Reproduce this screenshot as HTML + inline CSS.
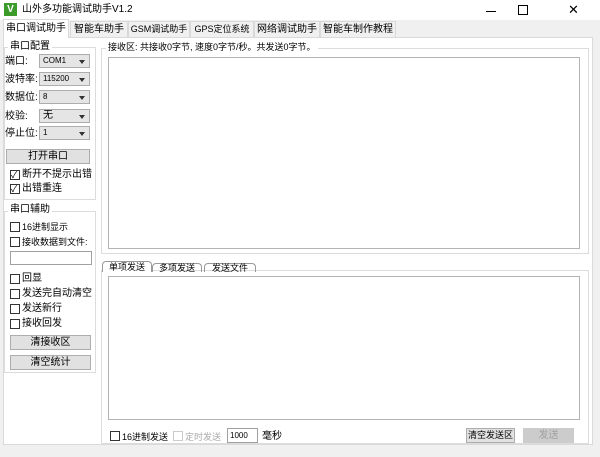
<!DOCTYPE html><html><head><meta charset="utf-8"><style>
*{box-sizing:border-box;margin:0;padding:0}
body{width:600px;height:457px;background:#f0f0f0;font-family:"Liberation Sans","Noto Sans CJK SC",sans-serif;font-size:10px;line-height:12px;color:#000;position:relative;overflow:hidden}
.a{position:absolute;white-space:nowrap}
.title{left:0;top:0;width:600px;height:20px;background:#fff}
.tab{top:21px;height:16px;border:1px solid #d9d9d9;border-bottom:none;background:#f0f0f0;text-align:center;line-height:15px;font-size:10px}
.panel{left:3px;top:37px;width:590px;height:408px;background:#fff;border:1px solid #dadada}
.grp{border:1px solid #dcdcdc}
.gl{background:#fff;padding:0 2px;line-height:12px}
.combo{height:14px;border:1px solid #adadad;background:#e5e5e5;font-size:8px;line-height:12px;padding-left:3px}
.combo:after{content:"";position:absolute;right:4px;top:5px;border:3px solid transparent;border-top:4px solid #333}
.btn{border:1px solid #adadad;background:#e1e1e1;text-align:center;line-height:13px;height:15px}
.cb{width:10px;height:10px;border:1px solid #333;background:#fff;font-size:9px;line-height:8px}
.box{border:1px solid #a0a0a0;background:#fff}
</style></head><body>
<div class="a title"></div>
<div class="a" style="left:4px;top:3px;width:13px;height:13px;background:#3c9b2a;color:#fff;font-size:10px;line-height:13px;text-align:center;font-weight:bold">V</div>
<div class="a" style="left:22px;top:4px;font-size:10px">山外多功能调试助手V1.2</div>
<div class="a" style="left:486px;top:11px;width:10px;height:1px;background:#000"></div>
<div class="a" style="left:518px;top:5px;width:10px;height:10px;border:1px solid #000"></div>
<div class="a" style="left:568px;top:3px;font-size:13px;line-height:14px">✕</div>
<div class="a panel"></div>
<div class="a tab" style="left:3px;top:19px;width:66px;height:19px;background:#fff;line-height:17px">串口调试助手</div>
<div class="a tab" style="left:70px;width:58px">智能车助手</div>
<div class="a tab" style="left:128px;width:62px;font-size:9px">GSM调试助手</div>
<div class="a tab" style="left:190px;width:64px;font-size:9px">GPS定位系统</div>
<div class="a tab" style="left:254px;width:66px">网络调试助手</div>
<div class="a tab" style="left:320px;width:76px">智能车制作教程</div>
<div class="a grp" style="left:4px;top:47px;width:92px;height:153px"></div>
<div class="a gl" style="left:8px;top:41px">串口配置</div>
<div class="a" style="left:5px;top:56px">端口:</div><div class="a combo" style="left:39px;top:54px;width:51px">COM1</div>
<div class="a" style="left:5px;top:74px">波特率:</div><div class="a combo" style="left:39px;top:72px;width:51px">115200</div>
<div class="a" style="left:5px;top:92px">数据位:</div><div class="a combo" style="left:39px;top:90px;width:51px">8</div>
<div class="a" style="left:5px;top:111px">校验:</div><div class="a combo" style="left:39px;top:109px;width:51px;font-size:10px">无</div>
<div class="a" style="left:5px;top:128px">停止位:</div><div class="a combo" style="left:39px;top:126px;width:51px">1</div>
<div class="a btn" style="left:6px;top:149px;width:84px">打开串口</div>
<div class="a cb" style="left:10px;top:170px">✓</div><div class="a" style="left:22px;top:169px">断开不提示出错</div>
<div class="a cb" style="left:10px;top:184px">✓</div><div class="a" style="left:22px;top:183px">出错重连</div>
<div class="a grp" style="left:4px;top:211px;width:92px;height:162px"></div>
<div class="a gl" style="left:8px;top:204px">串口辅助</div>
<div class="a cb" style="left:10px;top:222px"></div><div class="a" style="left:22px;top:221px;font-size:9px">16进制显示</div>
<div class="a cb" style="left:10px;top:237px"></div><div class="a" style="left:22px;top:236px;font-size:9px">接收数据到文件:</div>
<div class="a box" style="left:10px;top:251px;width:82px;height:14px"></div>
<div class="a cb" style="left:10px;top:274px"></div><div class="a" style="left:22px;top:273px">回显</div>
<div class="a cb" style="left:10px;top:289px"></div><div class="a" style="left:22px;top:288px">发送完自动清空</div>
<div class="a cb" style="left:10px;top:304px"></div><div class="a" style="left:22px;top:303px">发送新行</div>
<div class="a cb" style="left:10px;top:319px"></div><div class="a" style="left:22px;top:318px">接收回发</div>
<div class="a btn" style="left:10px;top:335px;width:81px">清接收区</div>
<div class="a btn" style="left:10px;top:355px;width:81px">清空统计</div>
<div class="a grp" style="left:101px;top:48px;width:488px;height:206px"></div>
<div class="a gl" style="left:106px;top:41px;font-size:9px">接收区: 共接收0字节, 速度0字节/秒。共发送0字节。</div>
<div class="a box" style="left:108px;top:57px;width:472px;height:192px;border-color:#b4b4b4"></div>
<div class="a" style="left:101px;top:270px;width:488px;height:174px;border:1px solid #dcdcdc"></div>
<div class="a" style="left:102px;top:261px;width:50px;height:11px;border:1px solid #999;border-bottom:none;border-radius:4px 4px 0 0;background:#fff;font-size:9px;line-height:10px;text-align:center">单项发送</div>
<div class="a" style="left:152px;top:263px;width:50px;height:9px;border:1px solid #999;border-bottom:none;border-radius:4px 4px 0 0;font-size:9px;line-height:9px;text-align:center">多项发送</div>
<div class="a" style="left:204px;top:263px;width:52px;height:9px;border:1px solid #999;border-bottom:none;border-radius:4px 4px 0 0;font-size:9px;line-height:9px;text-align:center">发送文件</div>
<div class="a box" style="left:108px;top:276px;width:472px;height:144px;border-color:#b4b4b4"></div>
<div class="a cb" style="left:110px;top:431px"></div><div class="a" style="left:122px;top:431px;font-size:9px">16进制发送</div>
<div class="a cb" style="left:173px;top:431px;border-color:#ccc"></div><div class="a" style="left:185px;top:431px;font-size:9px;color:#aaa">定时发送</div>
<div class="a box" style="left:227px;top:428px;width:31px;height:15px;font-size:8px;line-height:13px;padding-left:2px">1000</div>
<div class="a" style="left:262px;top:431px">毫秒</div>
<div class="a btn" style="left:466px;top:428px;width:49px;font-size:9px">清空发送区</div>
<div class="a btn" style="left:523px;top:428px;width:51px;color:#a0a0a0;border-color:#ccc;background:#ccc">发送</div>
</body></html>
